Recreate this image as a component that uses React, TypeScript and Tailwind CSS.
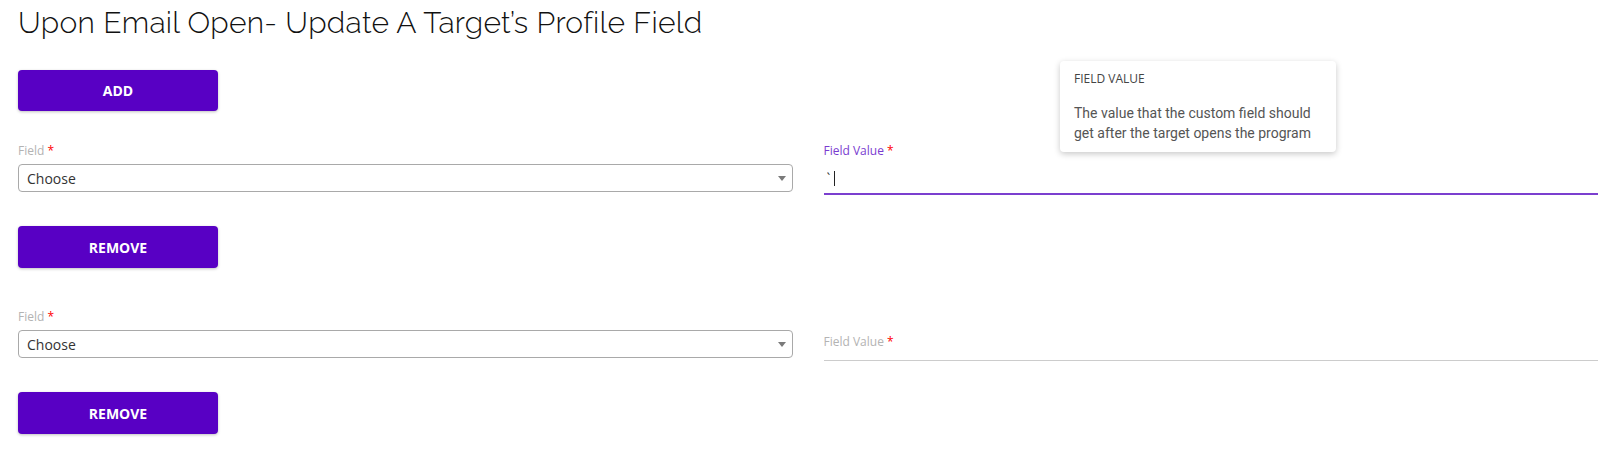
import { ChangeEvent } from 'react';

type Row = {
  id: number;
  value: string;
  focused: boolean;
};

const rows: Row[] = [
  { id: 1, value: '`', focused: true },
  { id: 2, value: '', focused: false },
];

function FieldSelect() {
  return (
    <div>
      <div className="h-[16px] text-[12px] leading-[16px] text-[#b3b3b3]">
        Field <span className="text-[#ff0000]">*</span>
      </div>
      <div className="mt-[5px] relative h-[28px] rounded-[4px] border border-[#a9a9a9] bg-white flex items-center pl-[8px]">
        <span className="text-[14px] text-[#333]">Choose</span>
        <span className="absolute right-[6px] top-[11px] w-0 h-0 border-l-[4px] border-r-[4px] border-t-[5px] border-l-transparent border-r-transparent border-t-[#7a7a7a]" />
      </div>
    </div>
  );
}

function FieldValue({ row }: { row: Row }) {
  const onChange = (_e: ChangeEvent<HTMLInputElement>) => {};
  return (
    <div
      className={`relative h-[52px] ${
        row.focused ? 'border-b-2 border-[#7b3fcf]' : 'border-b border-[#cccccc]'
      }`}
    >
      <div
        className={`absolute left-0 text-[12px] leading-[16px] ${
          row.focused ? 'top-0 text-[#7a3bd0]' : 'top-[25px] text-[#b3b3b3]'
        }`}
      >
        Field Value <span className="text-[#ff0000]">*</span>
      </div>
      {row.focused && (
        <div className="absolute left-0 top-[21px] h-[29px] flex items-center pl-[3px]">
          <input
            value={row.value}
            onChange={onChange}
            className="w-[6px] text-[14px] text-[#333] outline-none bg-transparent"
          />
          <span className="ml-[1px] w-[1px] h-[15px] bg-[#222]" />
        </div>
      )}
    </div>
  );
}

export default function App() {
  return (
    <div className="relative bg-white min-h-[455px] pl-[18px] pr-[15px] pt-[4px] font-['Open_Sans',sans-serif]">
      <h1 className="font-['Raleway','Lato',sans-serif] font-light text-[30px] leading-[38px] text-[#111] tracking-[0.3px]">
        Upon Email Open- Update A Target’s Profile Field
      </h1>

      <button className="mt-[28px] w-[200px] h-[41px] rounded-[4px] bg-[#5800c4] text-white font-bold text-[14px] shadow-[0_1px_3px_rgba(0,0,0,0.25)]">
        ADD
      </button>

      {rows.map((row, i) => (
        <div
          key={row.id}
          className={`grid grid-cols-2 gap-x-[31px] ${i === 0 ? 'mt-[32px]' : 'mt-[41px]'}`}
        >
          <div>
            <FieldSelect />
            <button className="mt-[34px] w-[200px] h-[42px] rounded-[4px] bg-[#5800c4] text-white font-bold text-[14px] shadow-[0_1px_3px_rgba(0,0,0,0.25)]">
              REMOVE
            </button>
          </div>
          <FieldValue row={row} />
        </div>
      ))}

      <div className="absolute left-[1060px] top-[61px] w-[276px] h-[91px] rounded-[4px] bg-white shadow-[0_2px_6px_rgba(0,0,0,0.22)] px-[14px] pt-[11px]">
        <div className="text-[12px] leading-[14px] text-[#444]">FIELD VALUE</div>
        <p className="mt-[17px] font-['Roboto',sans-serif] text-[14px] leading-[20px] text-[#555]">
          The value that the custom field should get after the target opens the program
        </p>
      </div>
    </div>
  );
}
